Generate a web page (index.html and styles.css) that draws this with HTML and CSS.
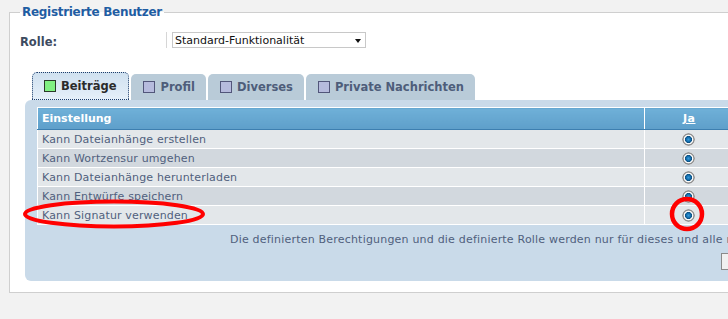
FILE: index.html
```html
<!DOCTYPE html>
<html>
<head>
<meta charset="utf-8">
<link rel="stylesheet" href="styles.css">
</head>
<body>
<div class="page">
  <fieldset class="group">
    <legend class="group-title">Registrierte Benutzer</legend>
    <div class="role-row">
      <label class="role-label">Rolle:</label>
      <span class="role-sep"></span>
      <div class="select">
        <span class="select-text">Standard-Funktionalität</span>
        <span class="select-arrow"></span>
      </div>
    </div>
    <div class="tabs">
      <div class="tab active"><span class="tab-icon"></span>Beiträge</div>
      <div class="tab"><span class="tab-icon"></span>Profil</div>
      <div class="tab"><span class="tab-icon"></span>Diverses</div>
      <div class="tab"><span class="tab-icon"></span>Private Nachrichten</div>
    </div>
    <div class="panel">
      <table class="perm-table">
        <colgroup><col class="c-name"><col class="c-yes"></colgroup>
        <thead>
          <tr><th class="col-name">Einstellung</th><th class="col-yes"><a class="yes-link">Ja</a></th></tr>
        </thead>
        <tbody>
          <tr class="odd"><td>Kann Dateianhänge erstellen</td><td class="radio-cell"><span class="radio"></span></td></tr>
          <tr class="even"><td>Kann Wortzensur umgehen</td><td class="radio-cell"><span class="radio"></span></td></tr>
          <tr class="odd"><td>Kann Dateianhänge herunterladen</td><td class="radio-cell"><span class="radio"></span></td></tr>
          <tr class="even"><td>Kann Entwürfe speichern</td><td class="radio-cell"><span class="radio"></span></td></tr>
          <tr class="odd"><td>Kann Signatur verwenden</td><td class="radio-cell"><span class="radio"></span></td></tr>
        </tbody>
      </table>
      <p class="note">Die definierten Berechtigungen und die definierte Rolle werden nur für dieses und alle nachfolgenden Foren übernommen.</p>
      <div class="actions"><button class="btn">Übernehmen</button></div>
    </div>
  </fieldset>
  <svg class="marks" width="728" height="319" viewBox="0 0 728 319">
    <ellipse cx="114" cy="214" rx="89" ry="12.5" fill="none" stroke="#ff0000" stroke-width="4"/>
    <circle cx="687" cy="214" r="15" fill="none" stroke="#ff0000" stroke-width="4.5"/>
  </svg>
</div>
</body>
</html>
```
FILE: styles.css
```css
html, body {
  margin: 0;
  padding: 0;
  background: #f2f2f2;
  overflow: hidden;
}
body {
  width: 728px;
  height: 319px;
  font-family: "DejaVu Sans", Verdana, sans-serif;
  font-size: 11px;
}
.page {
  position: relative;
  width: 728px;
  height: 319px;
  overflow: hidden;
  padding-top: 4px;
  box-sizing: border-box;
}
.group {
  margin: 0 0 0 9px;
  width: 900px;
  border: 1px solid #cfcfcf;
  background: #fff;
  padding: 12px 0 10px 15px;
  box-sizing: border-box;
  height: 289px;
}
.group-title {
  font-size: 12px;
  font-weight: bold;
  color: #1f5da3;
  padding: 0 2px;
  margin-left: -5px;
  line-height: 16px;
  font-family: "DejaVu Sans", Verdana, sans-serif;
  letter-spacing: -0.3px;
}
.role-row {
  display: flex;
  align-items: center;
  height: 16px;
  margin-left: -5px;
}
.role-label {
  font-weight: bold;
  font-size: 11.5px;
  color: #3d4b5f;
  width: 146px;
  margin-top: 4px;
}
.role-sep {
  width: 1px;
  height: 16px;
  background: #d6d6d6;
  margin-right: 5px;
}
.select {
  width: 194px;
  border: 1px solid #c8c8c8;
  display: flex;
  align-items: center;
  justify-content: space-between;
  padding: 0 4px 0 2px;
  box-sizing: border-box;
  height: 16px;
}
.select-text {
  color: #111;
  font-size: 11px;
}
.select-arrow {
  width: 0;
  height: 0;
  border-left: 3.5px solid transparent;
  border-right: 3.5px solid transparent;
  border-top: 4px solid #111;
  margin-top: 2px;
}
.tabs {
  display: flex;
  gap: 2px;
  margin-top: 24px;
  margin-left: 7px;
  height: 28px;
  align-items: flex-end;
}
.tab {
  height: 26px;
  display: flex;
  align-items: center;
  padding: 0 11px 0 12px;
  background: #b9cbd8;
  border-radius: 5px 5px 0 0;
  font-weight: bold;
  color: #4e5d7a;
  font-size: 11.5px;
  box-sizing: border-box;
}
.tab.active {
  height: 28px;
  background: linear-gradient(#cfe0ef, #e6f0fa);
  color: #2b2b2b;
  outline: 1px dotted #1d3c6a;
  outline-offset: -1px;
  padding: 0 13px 0 12px;
}
.tab-icon {
  width: 10px;
  height: 10px;
  border: 1px solid #52567a;
  background: #b6bbdd;
  margin-right: 5px;
  display: inline-block;
}
.tab.active .tab-icon {
  background: #80f082;
  border-color: #2a3a2a;
}
.panel {
  background: #c9dae9;
  border-radius: 6px;
  padding: 7px 0 0 12px;
  height: 181px;
  box-sizing: border-box;
}
.perm-table {
  border-collapse: collapse;
  table-layout: fixed;
  width: 694px;
  font-size: 11px;
}
.c-name { width: 607px; }
.c-yes { width: 87px; }
.perm-table th, .perm-table td {
  border: 1px solid #fff;
  padding: 0 0 0 4px;
  text-align: left;
  white-space: nowrap;
}
.perm-table th {
  height: 21px;
  background: linear-gradient(#6fb0d8, #5e9fca);
  color: #fff;
  font-weight: bold;
  border-bottom-color: #3d7fb0;
}
.perm-table thead th.col-yes {
  padding-left: 38px;
}
.yes-link {
  color: #fff;
  text-decoration: underline;
  letter-spacing: 0.5px;
}
.perm-table td {
  height: 18px;
  color: #505f7d;
  letter-spacing: 0.15px;
}
.perm-table tr.odd td { background: #e3e7ea; }
.perm-table tr.even td { background: #d2d8de; }
.perm-table td.radio-cell {
  padding: 0 0 0 37px;
}
.radio {
  display: block;
  width: 13px;
  height: 13px;
  border-radius: 50%;
  background: radial-gradient(circle at 50% 50%, #3a9ad8 0, #1572b3 2px, #0c4f80 3.3px, #ffffff 3.8px, #f4f4f4 4.6px, #8c8c8c 5.2px, #9a9a9a 6px, #d8d8d8 6.5px);
  box-sizing: border-box;
}
.note {
  margin: 8px 0 0 193px;
  color: #505f7d;
  font-size: 11px;
  white-space: nowrap;
  line-height: 13px;
  letter-spacing: 0.2px;
}
.actions {
  margin: 7px 0 0 684px;
}
.btn {
  font-family: "DejaVu Sans", Verdana, sans-serif;
  font-size: 11px;
  height: 17px;
  padding: 0 6px;
  background: #f0f0f0;
  border: 1px solid #8a8a8a;
}
.marks {
  position: absolute;
  left: 0;
  top: 0;
  pointer-events: none;
}
```
